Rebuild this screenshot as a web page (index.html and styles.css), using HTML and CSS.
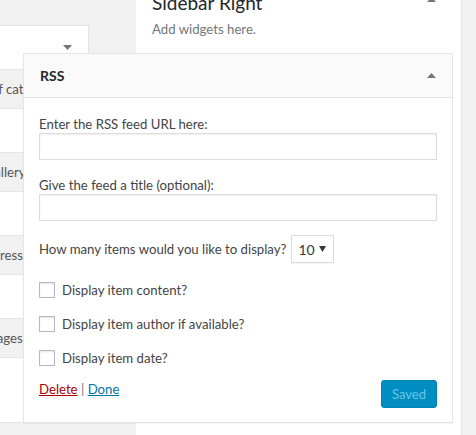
FILE: index.html
```html
<!DOCTYPE html>
<html lang="en">
<head>
    <meta charset="UTF-8">
    <meta name="viewport" content="width=device-width, initial-scale=1.0">
    <title>Widgets</title>
    <link rel="stylesheet" href="styles.css">
</head>

<body>
    <div class="screen">
        <div class="available">
            <div class="widget-box">
                <svg class="caret" width="9" height="5" viewBox="0 0 9 5"><path d="M0 0h9L4.5 5z"/></svg>
            </div>
            <p class="widget-desc">A list or dropdown of categories.</p>
            <div class="widget-box">
                <svg class="caret" width="9" height="5" viewBox="0 0 9 5"><path d="M0 0h9L4.5 5z"/></svg>
            </div>
            <p class="widget-desc">Displays an image gallery.</p>
            <div class="widget-box">
                <svg class="caret" width="9" height="5" viewBox="0 0 9 5"><path d="M0 0h9L4.5 5z"/></svg>
            </div>
            <p class="widget-desc">Login, RSS, &amp; WordPress.org links.</p>
            <div class="widget-box">
                <svg class="caret" width="9" height="5" viewBox="0 0 9 5"><path d="M0 0h9L4.5 5z"/></svg>
            </div>
            <p class="widget-desc">A list of your site’s Pages.</p>
            <div class="widget-box tall"></div>
        </div>

        <div class="gutter"></div>

        <div class="sidebar">
            <div class="sidebar-name">
                <h2>Sidebar Right</h2>
                <svg class="caret" width="9" height="5" viewBox="0 0 9 5"><path d="M0 5h9L4.5 0z"/></svg>
            </div>
            <p class="sidebar-desc">Add widgets here.</p>

            <div class="rss-widget">
                <div class="rss-head">
                    <h3>RSS</h3>
                    <svg class="caret" width="9" height="5" viewBox="0 0 9 5"><path d="M0 5h9L4.5 0z"/></svg>
                </div>
                <div class="rss-body">
                    <div class="field first">
                        <label for="rssUrl">Enter the RSS feed URL here:</label>
                        <input type="text" id="rssUrl">
                    </div>
                    <div class="field">
                        <label for="rssTitle">Give the feed a title (optional):</label>
                        <input type="text" id="rssTitle">
                    </div>
                    <div class="count-row">
                        <label for="rssItems">How many items would you like to display?</label>
                        <div class="select-wrap">
                            <select id="rssItems">
                                <option>10</option>
                            </select>
                            <svg class="select-arrow" width="7" height="6" viewBox="0 0 7 6"><path d="M0 0h7L3.5 6z"/></svg>
                        </div>
                    </div>
                    <label class="check-row"><input type="checkbox"> Display item content?</label>
                    <label class="check-row"><input type="checkbox"> Display item author if available?</label>
                    <label class="check-row"><input type="checkbox"> Display item date?</label>
                    <div class="rss-actions">
                        <div class="links">
                            <a href="#" class="delete-link">Delete</a> | <a href="#" class="done-link">Done</a>
                        </div>
                        <button class="saved-btn" disabled>Saved</button>
                    </div>
                </div>
            </div>
        </div>

        <div class="edge"></div>
    </div>
</body>
</html>
```

FILE: styles.css
```css
* {
    box-sizing: border-box;
}
body {
    margin: 0;
    width: 476px;
    height: 435px;
    overflow: hidden;
    background-color: #f1f1f1;
    font-family: Lato, 'Liberation Sans', Arial, sans-serif;
    font-size: 13.2px;
    color: #444;
}
.screen {
    display: flex;
    height: 435px;
}
.available {
    flex: none;
    width: 220px;
    margin-left: -131px;
    padding-top: 25px;
}
.widget-box {
    height: 45px;
    background-color: #fff;
    border: 1px solid #e5e5e5;
    display: flex;
    align-items: center;
    justify-content: flex-end;
    padding: 0 16px 0 15px;
}
.widget-box.tall {
    height: 66px;
}
.caret {
    fill: #72777c;
    flex: none;
}
.widget-desc {
    margin: 0;
    height: 38px;
    line-height: 38px;
    padding-left: 12px;
    white-space: nowrap;
    color: #555;
}
.gutter {
    flex: none;
    width: 47px;
}
.sidebar {
    flex: none;
    width: 326px;
    position: relative;
    background-color: #fff;
    border-right: 1px solid #e5e5e5;
    padding: 0 25px 0 16px;
}
.sidebar-name {
    display: flex;
    justify-content: space-between;
    margin-top: -9px;
    height: 24px;
}
.sidebar-name h2 {
    margin: 0;
    font-size: 19px;
    line-height: 24px;
    font-weight: normal;
    color: #23282d;
}
.sidebar-name .caret {
    margin-top: 6px;
}
.sidebar-desc {
    margin: 5px 0 0;
    line-height: 18px;
    color: #72777c;
}
.rss-widget {
    position: absolute;
    left: -113px;
    top: 53px;
    width: 430px;
    background-color: #fff;
    border: 1px solid #e5e5e5;
    box-shadow: 0 1px 1px rgba(0,0,0,0.04);
}
.rss-head {
    height: 44px;
    background-color: #fafafa;
    border-bottom: 1px solid #e5e5e5;
    display: flex;
    align-items: center;
    justify-content: space-between;
    padding: 0 16px;
}
.rss-head h3 {
    margin: 0;
    font-size: 14px;
    font-weight: bold;
    color: #23282d;
}
.rss-body {
    padding: 0 15px 14px;
}
.field {
    margin-top: 17px;
}
.field.first {
    margin-top: 18px;
}
.field label {
    display: block;
    line-height: 17px;
}
.field input {
    display: block;
    width: 100%;
    height: 27px;
    margin: 0;
    border: 1px solid #ddd;
    box-shadow: inset 0 1px 2px rgba(0,0,0,0.07);
    font: inherit;
}
.count-row {
    display: flex;
    align-items: center;
    gap: 5px;
    margin-top: 14px;
}
.select-wrap {
    position: relative;
    height: 28px;
}
.select-wrap select {
    appearance: none;
    width: 43px;
    height: 28px;
    margin: 0;
    padding: 0 0 0 6px;
    border: 1px solid #ddd;
    border-radius: 0;
    background-color: #fff;
    font: inherit;
    font-size: 14px;
    color: #32373c;
    box-shadow: 0 1px 1px rgba(0,0,0,0.04);
}
.select-arrow {
    position: absolute;
    right: 8px;
    top: 11px;
    fill: #32373c;
    pointer-events: none;
}
.check-row {
    display: flex;
    align-items: center;
    height: 16px;
    margin-top: 18px;
}
.count-row + .check-row {
    margin-top: 19px;
}
.check-row input {
    appearance: none;
    width: 16px;
    height: 16px;
    margin: 0 7px 0 0;
    border: 1px solid #b4b9be;
    background-color: #fff;
    box-shadow: inset 0 1px 2px rgba(0,0,0,0.1);
}
.rss-actions {
    display: flex;
    justify-content: space-between;
    align-items: flex-start;
    margin-top: 14px;
}
.links {
    line-height: 18px;
    color: #72777c;
}
.delete-link {
    color: #a00;
}
.done-link {
    color: #0073aa;
}
.saved-btn {
    width: 56px;
    height: 28px;
    background-color: #008ec2;
    border: 1px solid #0083b4;
    border-radius: 3px;
    color: #66c6e4;
    font: inherit;
    font-size: 13px;
    padding: 0;
}
.edge {
    flex: 1;
}
```
